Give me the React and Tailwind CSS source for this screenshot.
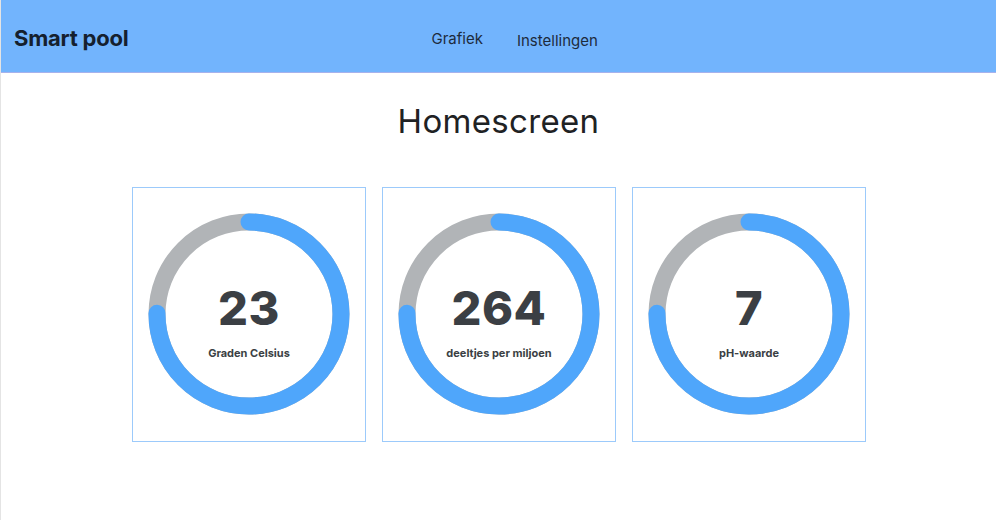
const readings = [
    { value: '23', label: 'Graden Celsius' },
    { value: '264', label: 'deeltjes per miljoen' },
    { value: '7', label: 'pH-waarde' },
];

function Gauge({ value, label, percent = 75 }) {
    const r = 92;
    const c = 2 * Math.PI * r;
    return (
        <div className="relative w-[202px] h-[202px]">
            <svg width="202" height="202" viewBox="0 0 202 202" className="absolute inset-0">
                <circle cx="101" cy="101" r={r} fill="none" stroke="#b1b4b7" strokeWidth="17" />
                <circle
                    cx="101"
                    cy="101"
                    r={r}
                    fill="none"
                    stroke="#4fa6fb"
                    strokeWidth="17"
                    strokeLinecap="round"
                    strokeDasharray={`${(c * percent) / 100} ${c}`}
                    transform="rotate(-90 101 101)"
                />
            </svg>
            <div className="absolute inset-0 flex flex-col items-center justify-center pt-[18px]">
                <span className="text-[47px] leading-none font-extrabold tracking-[0.01em] text-[#3b3f44]">{value}</span>
                <span className="mt-[14px] text-[11px] font-bold text-[#3b3f44]">{label}</span>
            </div>
        </div>
    );
}

export default function App() {
    return (
        <div className="min-h-[520px] bg-white border-l border-[#e4e4e4] font-['Inter','Liberation_Sans',sans-serif]">
            <header className="h-[73px] bg-[#72b4fd] border-b border-[#a7b2ec] flex items-center pl-[13px] pt-[4px]">
                <span className="text-[22px] font-bold text-[#15202e] tracking-[-0.01em]">Smart pool</span>
                <nav className="ml-[303px] flex gap-[34px] text-[15px] text-[#1d2b3c] pt-[7px]">
                    <span className="-mt-[2px]">Grafiek</span>
                    <span>Instellingen</span>
                </nav>
            </header>
            <main className="flex flex-col items-center">
                <h1 className="mt-[28px] text-[33px] leading-[40px] text-[#1f2224] tracking-[0.01em]">Homescreen</h1>
                <div className="mt-[46px] flex gap-[16px] pl-[1px]">
                    {readings.map((r) => (
                        <div key={r.label} className="w-[234px] h-[255px] border border-[#9ccafb] flex justify-center pt-[25px]">
                            <Gauge value={r.value} label={r.label} />
                        </div>
                    ))}
                </div>
            </main>
        </div>
    );
}
